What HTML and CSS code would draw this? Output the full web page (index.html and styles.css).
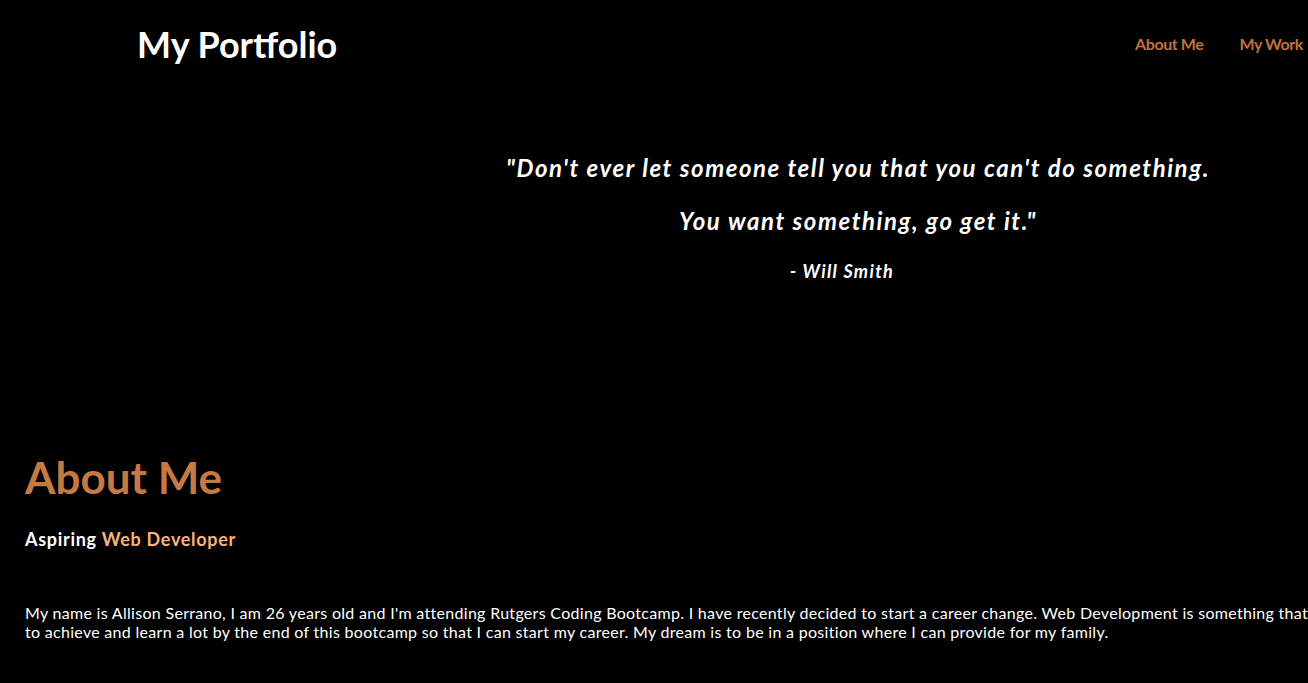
FILE: index.html
```html
<!DOCTYPE html>
<html lang="en">
<head>
<meta charset="utf-8">
<title>My Portfolio</title>
<link rel="stylesheet" href="styles.css">
</head>
<body>
<header class="site-header">
  <h1 class="site-title">My Portfolio</h1>
  <nav class="site-nav">
    <a href="#about" class="nav-link">About Me</a>
    <a href="#work" class="nav-link">My Work</a>
  </nav>
</header>
<section class="quote">
  <p class="quote-line quote-line-first">"Don't ever let someone tell you that you can't do something.</p>
  <p class="quote-line">You want something, go get it."</p>
  <p class="quote-author">- Will Smith</p>
</section>
<section class="about" id="about">
  <h2 class="about-title">About Me</h2>
  <h3 class="about-subtitle">Aspiring <span class="accent">Web Developer</span></h3>
  <p class="about-text">My name is Allison Serrano, I am 26 years old and I'm attending Rutgers Coding Bootcamp. I have recently decided to start a career change. Web Development is something that I love and I am hoping<br>to achieve and learn a lot by the end of this bootcamp so that I can start my career. My dream is to be in a position where I can provide for my family.</p>
</section>
</body>
</html>
```
FILE: styles.css
```css
html {
  overflow: hidden;
}
body {
  margin: 0;
  background: #000;
  color: #fff;
  font-family: Lato, "Open Sans", sans-serif;
}
.site-header {
  display: flex;
  justify-content: space-between;
  align-items: center;
  height: 87px;
  padding: 0 5px 0 137px;
}
.site-title {
  margin: 0;
  font-size: 36px;
  font-weight: 700;
  line-height: 44px;
}
.site-nav {
  display: flex;
  gap: 36px;
}
.nav-link {
  color: #c2723d;
  font-size: 16px;
  font-weight: 700;
  letter-spacing: -0.4px;
  text-decoration: none;
}
.quote {
  padding-left: 408px;
  text-align: center;
  font-style: italic;
  font-weight: 700;
  margin-top: 66px;
}
.quote-line {
  margin: 0 0 23px;
  font-size: 24px;
  line-height: 30px;
  letter-spacing: 1.55px;
}
.quote-author {
  margin: 0 32px 0 0;
  font-size: 18px;
  line-height: 24px;
  letter-spacing: 1.3px;
}
.about {
  padding: 0 25px;
  margin-top: 166px;
}
.about-title {
  margin: 0;
  color: #c57a44;
  font-size: 44px;
  line-height: 56px;
  font-weight: 700;
}
.about-subtitle {
  margin: 22px 0 0;
  font-size: 18px;
  line-height: 24px;
  font-weight: 700;
  letter-spacing: 0.7px;
}
.accent {
  color: #f8b47c;
}
.about-text {
  width: 1700px;
  margin: 52px 0 0;
  font-size: 16px;
  line-height: 19px;
  letter-spacing: 0.3px;
}
```
